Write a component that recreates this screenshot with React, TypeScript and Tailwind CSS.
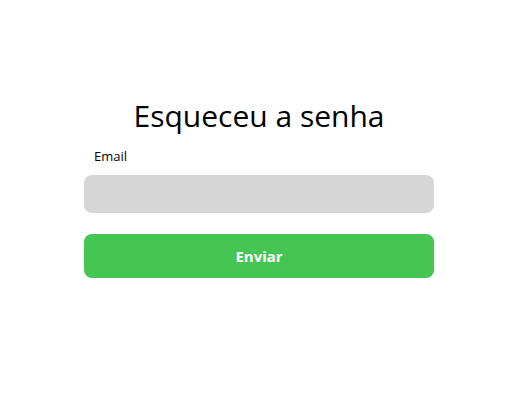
export default function App() {
  return (
    <div
      className="h-[403px] w-[508px] bg-white"
      style={{ fontFamily: '"Open Sans", "Noto Sans", sans-serif' }}
    >
      <div className="ml-[84px] w-[350px] pt-[96px]">
        <h1 className="text-center text-[30px] leading-[40px] text-black">
          Esqueceu a senha
        </h1>
        <label className="mt-[11px] block pl-[10px] text-[13px] leading-[18px] text-black">
          Email
        </label>
        <input
          type="email"
          className="mt-[10px] block h-[38px] w-full rounded-[8px] bg-[#d6d6d6] px-3 outline-none"
        />
        <button className="mt-[21px] flex h-[44px] w-full items-center justify-center rounded-[8px] bg-[#45c553] text-[15px] font-bold text-white">
          Enviar
        </button>
      </div>
    </div>
  );
}
